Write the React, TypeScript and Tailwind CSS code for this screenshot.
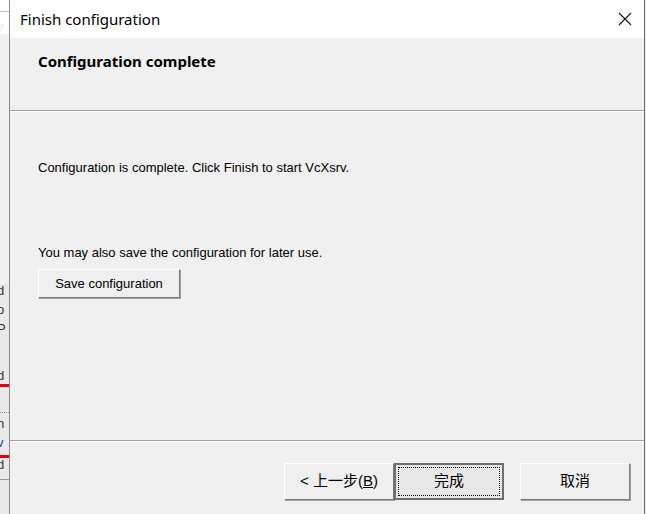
import React from "react";

const ui = { fontFamily: '"Liberation Sans", Arial, sans-serif' };
const noto = { fontFamily: '"Noto Sans", "Liberation Sans", sans-serif' };
const cjk = { fontFamily: '"Liberation Sans", "Noto Sans CJK SC", sans-serif' };

function Btn({ children, focus }: { children: React.ReactNode; focus?: boolean }) {
  if (focus) {
    return (
      <div className="w-[110px] h-[37px] border-2 border-[#6e6e6e] bg-[#e8e8e8] p-[2px]">
        <div
          className="h-full border border-dotted border-black flex items-center justify-center text-[15px] text-black"
          style={cjk}
        >
          {children}
        </div>
      </div>
    );
  }
  return (
    <div
      className="w-[110px] h-[37px] border border-t-white border-l-white border-r-[#7a7a7a] border-b-[#7a7a7a] bg-[#efefef] shadow-[1px_1px_0_#a0a0a0] flex items-center justify-center text-[15px] text-black"
      style={cjk}
    >
      {children}
    </div>
  );
}

export default function App() {
  return (
    <div className="w-[646px] h-[514px] flex bg-[#e9e9e9] overflow-hidden" style={ui}>
      {/* background app peeking out on the left */}
      <div className="w-[9px] flex flex-col overflow-hidden text-[13px] leading-none">
        <div className="h-[11px] bg-white" />
        <div className="h-px bg-[#bbb]" />
        <div className="h-[22px] bg-white flex items-end pb-1">
          <span className="text-[6px] text-red-600">.'</span>
        </div>
        <div className="h-[250px] bg-[#f0f0f0]" />
        <div className="flex flex-col -ml-[3px] gap-[6px] text-[#334]">
          <span>d</span>
          <span>o</span>
          <span>P</span>
          <span className="mt-[28px]">d</span>
          <span className="h-[3px] bg-red-600 -mt-[4px]" />
          <span>l</span>
          <span className="border-t border-dotted border-[#888] pt-1">n</span>
          <span className="text-[#247]">v</span>
          <span className="h-[3px] bg-red-600" />
          <span className="-mt-[6px]">d</span>
        </div>
        <div className="mt-[8px] h-px bg-[#999]" />
      </div>

      {/* dialog window */}
      <div className="w-[636px] h-full border-l border-[#8c8c8c] border-r border-r-[#6a6a6a] flex flex-col bg-[#f0f0f0]">
        {/* title bar */}
        <div className="h-[38px] bg-white flex items-center justify-between pl-[10px] pr-[12px]">
          <span className="text-[15px] text-black" style={noto}>Finish configuration</span>
          <svg width="14" height="14" viewBox="0 0 14 14">
            <path d="M1 1L13 13M13 1L1 13" stroke="#111" strokeWidth="1.1" />
          </svg>
        </div>

        {/* header */}
        <div className="h-[72px] pl-[28px] pt-[12px]">
          <div className="text-[15px] font-bold text-black" style={noto}>Configuration complete</div>
        </div>
        <div className="h-px bg-[#a0a0a0]" />
        <div className="h-px bg-white" />

        {/* body */}
        <div className="flex-1 pl-[28px] text-[13px] leading-[16px] text-black">
          <div className="mt-[48px]">Configuration is complete. Click Finish to start VcXsrv.</div>
          <div className="mt-[69px]">You may also save the configuration for later use.</div>
          <div className="mt-[8px] w-[142px] h-[29px] border border-t-white border-l-white border-r-[#7a7a7a] border-b-[#7a7a7a] shadow-[1px_1px_0_#a0a0a0] bg-[#efefef] flex items-center justify-center text-[13px]">
            Save configuration
          </div>
        </div>

        {/* footer */}
        <div className="h-px bg-[#a0a0a0]" />
        <div className="h-px bg-white" />
        <div className="h-[72px] flex items-start justify-end pt-[21px] pr-[14px]">
          <Btn>&lt; 上一步(<span className="underline">B</span>)</Btn>
          <Btn focus>完成</Btn>
          <div className="w-[16px]" />
          <Btn>取消</Btn>
        </div>
      </div>
    </div>
  );
}
